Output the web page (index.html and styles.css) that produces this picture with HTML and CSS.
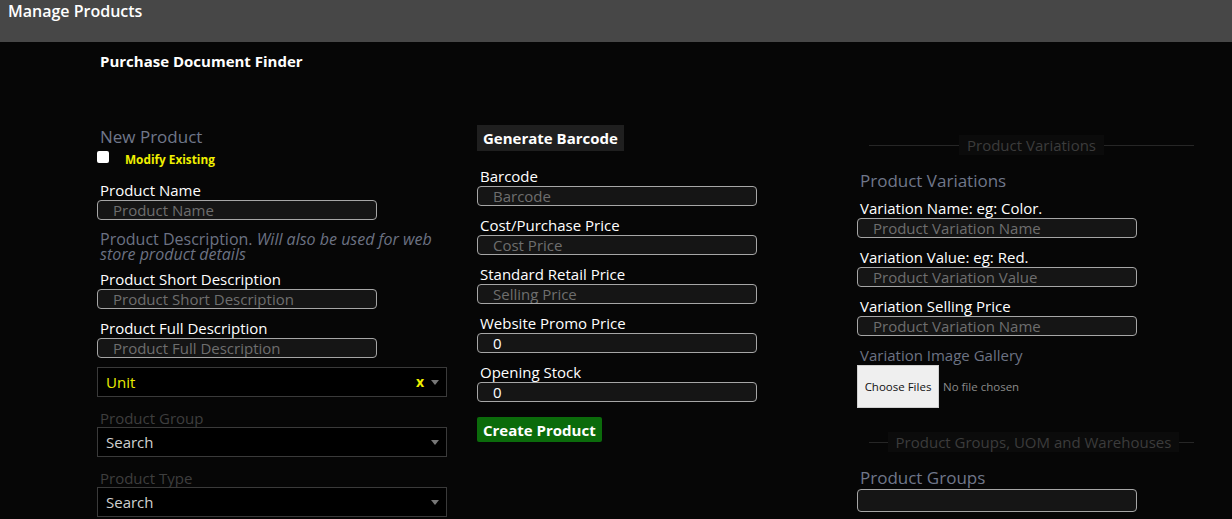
FILE: index.html
```html
<!DOCTYPE html>
<html>
<head>
<meta charset="utf-8">
<link rel="stylesheet" href="styles.css">
</head>
<body>
<header class="topbar"><h1 class="page-title">Manage Products</h1></header>
<main class="main">
  <div class="finder">Purchase Document Finder</div>
  <div class="columns">
    <section class="col col-1">
      <h4 class="heading">New Product</h4>
      <div class="check-row">
        <input type="checkbox" class="check">
        <span class="check-label">Modify Existing</span>
      </div>
      <label class="label first">Product Name</label>
      <input class="field" placeholder="Product Name">
      <p class="desc"><span class="desc-line">Product Description. <em>Will also be used for web</em></span><em class="desc-line">store product details</em></p>
      <label class="label after-desc">Product Short Description</label>
      <input class="field" placeholder="Product Short Description">
      <label class="label">Product Full Description</label>
      <input class="field" placeholder="Product Full Description">
      <div class="select unit">
        <span class="select-text yellow">Unit</span>
        <span class="clear">x</span>
        <span class="caret"></span>
      </div>
      <label class="label dim">Product Group</label>
      <div class="select">
        <span class="select-text">Search</span>
        <span class="caret"></span>
      </div>
      <label class="label dim">Product Type</label>
      <div class="select">
        <span class="select-text">Search</span>
        <span class="caret"></span>
      </div>
    </section>
    <section class="col col-2">
      <button class="btn btn-dark">Generate Barcode</button>
      <label class="label first2">Barcode</label>
      <input class="field" placeholder="Barcode">
      <label class="label">Cost/Purchase Price</label>
      <input class="field" placeholder="Cost Price">
      <label class="label">Standard Retail Price</label>
      <input class="field" placeholder="Selling Price">
      <label class="label">Website Promo Price</label>
      <input class="field" value="0">
      <label class="label">Opening Stock</label>
      <input class="field" value="0">
      <button class="btn btn-green">Create Product</button>
    </section>
    <section class="col col-3">
      <div class="divider first-div"><span class="divider-text">Product Variations</span></div>
      <h4 class="heading h-var">Product Variations</h4>
      <label class="label tight">Variation Name: eg: Color.</label>
      <input class="field" placeholder="Product Variation Name">
      <label class="label">Variation Value: eg: Red.</label>
      <input class="field" placeholder="Product Variation Value">
      <label class="label">Variation Selling Price</label>
      <input class="field" placeholder="Product Variation Name">
      <label class="label muted">Variation Image Gallery</label>
      <div class="file-row">
        <span class="file-btn">Choose Files</span>
        <span class="file-none">No file chosen</span>
      </div>
      <div class="divider second-div"><span class="divider-text">Product Groups, UOM and Warehouses</span></div>
      <h4 class="heading h-groups">Product Groups</h4>
      <input class="field tall">
    </section>
  </div>
</main>
</body>
</html>
```

FILE: styles.css
```css
* { box-sizing: border-box; }
html, body { margin: 0; padding: 0; }
body {
  background: #060606;
  color: #fff;
  font-family: "Open Sans", "Noto Sans", sans-serif;
  height: 519px;
  overflow: hidden;
}
.topbar {
  background: #474747;
  height: 42px;
  padding: 0 8px;
}
.page-title {
  margin: 0;
  font-size: 16px;
  font-weight: 600;
  line-height: 22px;
  color: #fff;
}
.main { padding-left: 97px; }
.finder {
  font-size: 15px;
  font-weight: 700;
  line-height: 18px;
  padding: 10px 0 0 3px;
  height: 85px;
}
.columns { display: flex; align-items: flex-start; }
.col { display: flex; flex-direction: column; align-items: flex-start; }
.col-1 { width: 350px; }
.col-2 { width: 280px; margin-left: 30px; margin-top: -2px; }
.col-3 { width: 343px; margin-left: 100px; }

.heading {
  margin: 0;
  font-size: 17px;
  font-weight: 400;
  line-height: 20px;
  color: #70778a;
  padding-left: 3px;
}
.check-row { display: flex; align-items: center; height: 16px; margin-top: 4px; }
.check {
  margin: 0;
  width: 12px; height: 12px;
  appearance: none;
  background: #fff;
  border-radius: 2px;
  position: relative; top: -2px;
}
.check-label {
  color: #f0f000;
  font-size: 11.8px;
  font-weight: 700;
  margin-left: 16px;
  line-height: 16px;
}
.label {
  display: block;
  font-size: 15px;
  line-height: 19px;
  color: #fff;
  padding-left: 3px;
  margin-top: 10px;
  white-space: nowrap;
}
.label.first { margin-top: 14px; }
.label.after-desc { margin-top: 8px; }
.label.first2 { margin-top: 16px; }
.label.tight { margin-top: 8px; }
.label.dim { color: #3e3e3e; margin-top: 12px; line-height: 18px; }
.label.muted { color: #6c7283; }
.field {
  display: block;
  width: 280px;
  height: 20px;
  background: #151515;
  border: 1px solid #a6a6a6;
  border-radius: 4px;
  color: #fff;
  font-family: inherit;
  font-size: 15px;
  padding: 0 0 0 15px;
  outline: none;
}
.field::placeholder { color: #6e6e6e; }
.field.tall { height: 23px; margin-top: 1px; }
.desc {
  margin: 12px 0 0;
  padding-left: 3px;
  font-size: 16px;
  color: #6c7283;
  width: 345px;
}
.desc-line { display: block; line-height: 15px; white-space: nowrap; }
.desc em { font-style: italic; }
.select {
  width: 350px;
  height: 30px;
  border: 1px solid #3a3a3a;
  background: #000;
  display: flex;
  align-items: center;
  padding: 0 6px 0 8px;
}
.select.unit { margin-top: 9px; }
.select-text { flex: 1; font-size: 15px; color: #d0d0d0; }
.select-text.yellow { color: #eded00; }
.clear {
  color: #f0f000;
  font-weight: 700;
  font-size: 14px;
  line-height: 14px;
  margin-right: 7px;
}
.caret {
  width: 0; height: 0;
  border-left: 4px solid transparent;
  border-right: 4px solid transparent;
  border-top: 5px solid #777;
  margin-right: 1px;
}
.btn {
  border: 0;
  font-family: inherit;
  font-weight: 700;
  font-size: 15px;
  color: #fff;
  padding: 0 6px;
  cursor: pointer;
}
.btn-dark { background: #1f1f1f; height: 26px; }
.btn-green { background: #0b6b0b; height: 25px; margin-top: 15px; border-radius: 2px; }

.divider {
  width: 343px;
  height: 20px;
  display: flex;
  align-items: center;
  justify-content: center;
  position: relative;
  padding-left: 10px;
}
.divider::before {
  content: "";
  position: absolute;
  left: 12px; right: 6px; top: 50%;
  border-top: 1px solid #262626;
}
.divider-text {
  position: relative;
  background: #0b0b0b;
  color: #3c3c3c;
  font-size: 15px;
  line-height: 20px;
  padding: 0 8px;
}
.first-div { margin-top: 8px; justify-content: flex-start; padding-left: 102px; }
.second-div { margin-top: 24px; }
.h-var { margin-top: 16px; }
.h-groups { margin-top: 16px; }
.file-row { display: flex; align-items: center; margin-top: 0; }
.file-btn {
  background: #efefef;
  color: #111;
  font-size: 11.5px;
  width: 82px;
  height: 43px;
  display: flex;
  align-items: center;
  justify-content: center;
  border: 1px solid #d0d0d0;
}
.file-none { color: #8a8a8a; font-size: 11.5px; margin-left: 4px; }
```
